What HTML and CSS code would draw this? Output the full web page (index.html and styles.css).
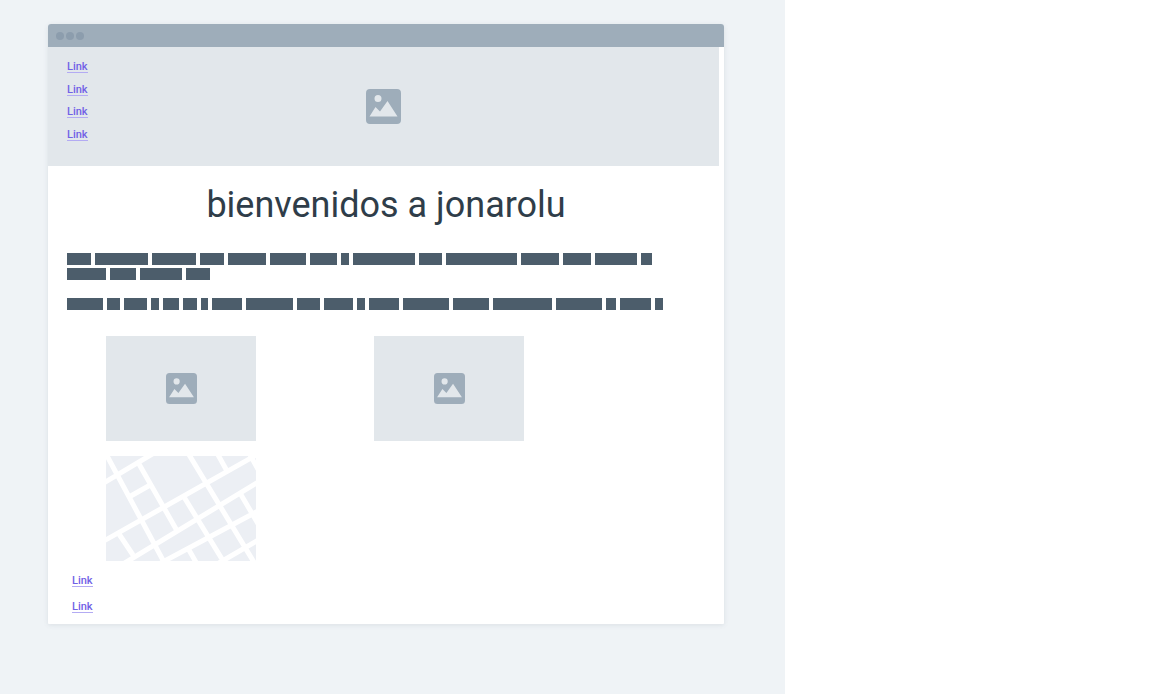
FILE: index.html
```
<!DOCTYPE html>
<html lang="es">
<head>
<meta charset="utf-8">
<meta name="viewport" content="width=device-width, initial-scale=1">
<title>bienvenidos a jonarolu</title>
<link rel="stylesheet" href="styles.css">
</head>
<body>
<svg class="defs" aria-hidden="true">
  <symbol id="picture" viewBox="0 0 35 35">
    <path fill="#9eadba" fill-rule="evenodd" d="M4 0H31Q35 0 35 4V31Q35 35 31 35H4Q0 35 0 31V4Q0 0 4 0ZM12 6A3.500 3.500 0 1 0 12 13A3.500 3.500 0 1 0 12 6ZM3.500 27.500H31.500L21.500 12L14 22.500L9.500 18Z"/>
  </symbol>
</svg>
<main class="canvas">
  <div class="window">
    <div class="bar"><i class="dot"></i><i class="dot"></i><i class="dot"></i></div>
    <header class="hero">
      <nav class="menu">
        <a class="link" href="#">Link</a>
        <a class="link" href="#">Link</a>
        <a class="link" href="#">Link</a>
        <a class="link" href="#">Link</a>
      </nav>
      <svg class="hero-icon" role="img" aria-label="Image"><use href="#picture"/></svg>
    </header>
    <h1 class="title">bienvenidos a jonarolu</h1>
    <div class="copy">
      <div class="line"><i style="width:24px"></i><i style="width:53px"></i><i style="width:44px"></i><i style="width:24px"></i><i style="width:38px"></i><i style="width:36px"></i><i style="width:27px"></i><i style="width:8px"></i><i style="width:62px"></i><i style="width:23px"></i><i style="width:71px"></i><i style="width:38px"></i><i style="width:28px"></i><i style="width:42px"></i><i style="width:11px"></i><i style="width:39px"></i><i style="width:26px"></i><i style="width:42px"></i><i style="width:24px"></i></div>
      <div class="line"><i style="width:36px"></i><i style="width:13px"></i><i style="width:23px"></i><i style="width:8px"></i><i style="width:16px"></i><i style="width:14px"></i><i style="width:7px"></i><i style="width:30px"></i><i style="width:47px"></i><i style="width:23px"></i><i style="width:29px"></i><i style="width:8px"></i><i style="width:30px"></i><i style="width:46px"></i><i style="width:36px"></i><i style="width:59px"></i><i style="width:46px"></i><i style="width:10px"></i><i style="width:31px"></i><i style="width:8px"></i></div>
    </div>
    <section class="gallery">
      <div class="tile"><svg class="tile-icon" viewBox="0 0 35 35" role="img" aria-label="Image"><use href="#picture"/></svg></div>
      <div class="tile"><svg class="tile-icon" viewBox="0 0 35 35" role="img" aria-label="Image"><use href="#picture"/></svg></div>
      <svg class="map" viewBox="0 0 150 105" role="img" aria-label="Map">
        <path fill="#eceff4" d="M0 0H150V105H0Z"/>
        <path fill="none" stroke="#fff" stroke-width="5" d="M-4 28L48 -3M-4 86L154 -3M17 108L154 25M53 108L154 54M113 107L154 83M23 41L46 28M-1 -4L59 108M33 8L70 73M82 -3L149 108M78 41L119 108M111 -3L121 15M143 -3L153 15M134 37L154 71M13 78L27 99M83 94L91 108"/>
      </svg>
    </section>
    <footer class="footer">
      <a class="link" href="#">Link</a>
      <a class="link" href="#">Link</a>
    </footer>
  </div>
</main>
</body>
</html>
```
FILE: styles.css
```
* { box-sizing: border-box; }
body {
  margin: 0;
  background: #fff;
  font-family: Roboto, "Liberation Sans", sans-serif;
}
.defs { position: absolute; width: 0; height: 0; }
.canvas {
  width: 68.15%;
  min-height: 100vh;
  padding: 24px 61px 69px 48px;
  background: #eff3f6;
}
.window {
  background: #fff;
  border-radius: 4px 4px 1px 1px;
  box-shadow: 0 1px 5px rgba(70, 90, 110, 0.12);
}
.bar {
  display: flex;
  align-items: center;
  gap: 2px;
  height: 23px;
  padding-left: 8px;
  background: #9eadba;
  border-radius: 3px 3px 0 0;
}
.dot {
  width: 8px;
  height: 8px;
  border-radius: 50%;
  background: #8c9dad;
}
.hero {
  display: grid;
  grid-template-columns: 1fr auto 1fr;
  align-items: center;
  margin-right: 5px;
  padding: 8px 19px 21px;
  background: #e2e7eb;
}
.menu {
  display: grid;
  grid-auto-rows: 1fr;
  justify-items: start;
  align-items: center;
  height: 90px;
}
.link {
  padding-top: 2px;
  color: #7161e6;
  font-size: 11px;
  line-height: 11px;
  font-weight: 500;
  text-decoration: none;
  border-bottom: 1px solid #b3abf3;
}
.hero-icon { width: 35px; height: 35px; margin-top: 13px; }
.title {
  margin: 0;
  padding-top: 18px;
  color: #2f3d49;
  font-size: 36px;
  line-height: 42px;
  font-weight: 400;
  text-align: center;
}
.copy {
  display: grid;
  gap: 18px;
  padding: 27px 54px 0 19px;
}
.line {
  display: flex;
  flex-wrap: wrap;
  gap: 3px 4px;
}
.line i {
  height: 12px;
  background: #4c5d6b;
}
.gallery {
  display: grid;
  grid-template-columns: 43.4% 1fr;
  gap: 15px 0;
  padding: 26px 0 0 58px;
}
.tile {
  display: flex;
  align-items: center;
  justify-content: center;
  width: 150px;
  height: 105px;
  background: #e2e7eb;
}
.tile-icon { width: 31px; height: 31px; }
.map { width: 150px; height: 105px; }
.footer {
  display: flex;
  flex-direction: column;
  align-items: flex-start;
  gap: 12px;
  padding: 12px 24px 11px;
}
```
